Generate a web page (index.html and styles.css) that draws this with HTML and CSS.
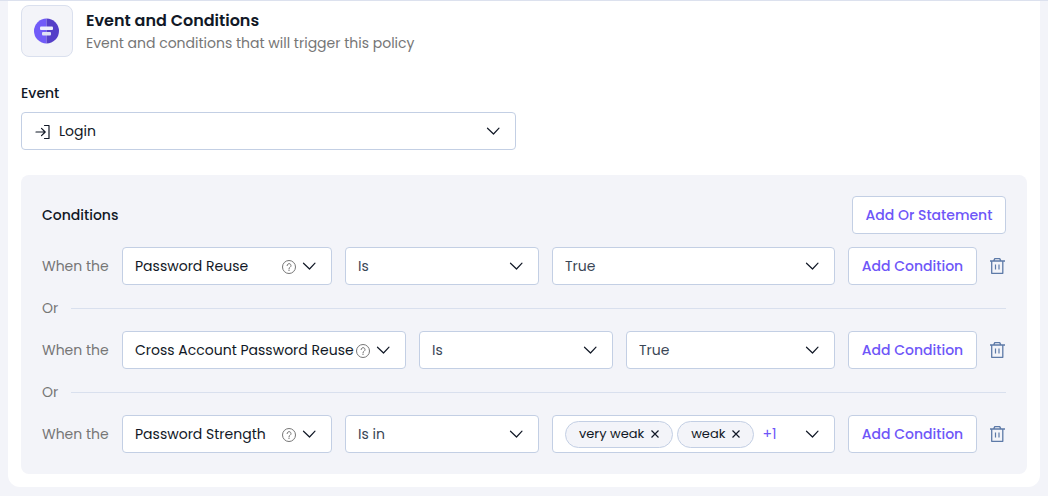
FILE: index.html
```html
<!DOCTYPE html>
<html lang="en">
<head>
  <meta charset="UTF-8">
  <meta name="viewport" content="width=device-width, initial-scale=1.0">
  <title>Policy | Event and Conditions</title>
  <link rel="stylesheet" href="styles.css">
</head>
<body>
  <svg class="sprite" aria-hidden="true">
    <symbol id="icon-chevron" viewBox="0 0 14 14">
      <path d="M1.500 4.200L7.500 10L13 4.200" fill="none" stroke="currentColor" stroke-width="1.200" stroke-linecap="round" stroke-linejoin="round"/>
    </symbol>
    <symbol id="icon-help" viewBox="0 0 16 16">
      <circle cx="8" cy="8" r="6.500" fill="none" stroke="currentColor"/>
      <path d="M6.100 6.600a1.950 1.950 0 1 1 3 1.600C8.300 8.700 8 9 8 9.700" fill="none" stroke="currentColor" stroke-linecap="round"/>
      <circle cx="8" cy="11.300" r="0.700" fill="currentColor"/>
    </symbol>
    <symbol id="icon-trash" viewBox="0 0 16 18">
      <path d="M0 4H15M1.700 4V16.300H12.800V4M3.800 3.600L4.800 1.600H9.700L10.700 3.600" fill="none" stroke="currentColor" stroke-width="1.300" stroke-linejoin="round"/>
      <path d="M5.500 7.500V12.500M9 7.500V12.500" stroke="currentColor" stroke-width="1.200"/>
    </symbol>
    <symbol id="icon-close" viewBox="0 0 10 10">
      <path d="M1.500 1.500L8.500 8.500M8.500 1.500L1.500 8.500" stroke="currentColor" stroke-width="1.200"/>
    </symbol>
  </svg>

  <main class="card">
    <header class="card-header">
      <div class="policy-icon">
        <svg width="26" height="26" viewBox="0 0 26 26" aria-hidden="true">
          <path d="M12.500 0.500a12.500 12.500 0 0 0 0 25z" fill="#715bf8"/>
          <path d="M12.500 0.500a12.500 12.500 0 0 1 0 25z" fill="#553fc8"/>
          <rect x="6" y="8.500" width="13" height="3.500" rx="1" fill="#eef0fb"/>
          <rect x="8" y="14" width="9" height="3.500" rx="1" fill="#dfe1f4"/>
        </svg>
      </div>
      <div>
        <h1>Event and Conditions</h1>
        <p>Event and conditions that will trigger this policy</p>
      </div>
    </header>

    <div class="event">
      <label for="event">Event</label>
      <div class="field">
        <svg class="login-icon" width="16" height="16" viewBox="0 0 16 16" aria-hidden="true">
          <path d="M1 8H10M6.500 4.300L10.200 8L6.500 11.700M9.500 1.500H14V14.500H9.500" fill="none" stroke="currentColor" stroke-width="1.200" stroke-linecap="round" stroke-linejoin="round"/>
        </svg>
        <select id="event" class="has-icon"><option>Login</option></select>
        <svg class="chevron" aria-hidden="true"><use href="#icon-chevron"/></svg>
      </div>
    </div>

    <section class="conditions">
      <div class="conditions-header">
        <h2>Conditions</h2>
        <button type="button" class="btn btn-or">Add Or Statement</button>
      </div>

      <div class="condition">
        <label for="attr1">When the</label>
        <div class="field attribute">
          <select id="attr1"><option>Password Reuse</option></select>
          <svg class="help" aria-hidden="true"><use href="#icon-help"/></svg>
          <svg class="chevron" aria-hidden="true"><use href="#icon-chevron"/></svg>
        </div>
        <div class="field operator">
          <select aria-label="Operator"><option>Is</option></select>
          <svg class="chevron" aria-hidden="true"><use href="#icon-chevron"/></svg>
        </div>
        <div class="field value">
          <select aria-label="Value"><option>True</option></select>
          <svg class="chevron" aria-hidden="true"><use href="#icon-chevron"/></svg>
        </div>
        <button type="button" class="btn">Add Condition</button>
        <button type="button" class="delete" aria-label="Delete"><svg aria-hidden="true"><use href="#icon-trash"/></svg></button>
      </div>

      <div class="divider">Or</div>

      <div class="condition">
        <label for="attr2">When the</label>
        <div class="field attribute wide">
          <select id="attr2"><option>Cross Account Password Reuse</option></select>
          <svg class="help" aria-hidden="true"><use href="#icon-help"/></svg>
          <svg class="chevron" aria-hidden="true"><use href="#icon-chevron"/></svg>
        </div>
        <div class="field operator">
          <select aria-label="Operator"><option>Is</option></select>
          <svg class="chevron" aria-hidden="true"><use href="#icon-chevron"/></svg>
        </div>
        <div class="field value">
          <select aria-label="Value"><option>True</option></select>
          <svg class="chevron" aria-hidden="true"><use href="#icon-chevron"/></svg>
        </div>
        <button type="button" class="btn">Add Condition</button>
        <button type="button" class="delete" aria-label="Delete"><svg aria-hidden="true"><use href="#icon-trash"/></svg></button>
      </div>

      <div class="divider">Or</div>

      <div class="condition">
        <label for="attr3">When the</label>
        <div class="field attribute">
          <select id="attr3"><option>Password Strength</option></select>
          <svg class="help" aria-hidden="true"><use href="#icon-help"/></svg>
          <svg class="chevron" aria-hidden="true"><use href="#icon-chevron"/></svg>
        </div>
        <div class="field operator">
          <select aria-label="Operator"><option>Is in</option></select>
          <svg class="chevron" aria-hidden="true"><use href="#icon-chevron"/></svg>
        </div>
        <div class="field value multi">
          <span class="chip">very weak <button type="button" aria-label="Remove very weak"><svg aria-hidden="true"><use href="#icon-close"/></svg></button></span>
          <span class="chip">weak <button type="button" aria-label="Remove weak"><svg aria-hidden="true"><use href="#icon-close"/></svg></button></span>
          <button type="button" class="more">+1</button>
          <select aria-label="Value"><option label=" "></option></select>
          <svg class="chevron" aria-hidden="true"><use href="#icon-chevron"/></svg>
        </div>
        <button type="button" class="btn">Add Condition</button>
        <button type="button" class="delete" aria-label="Delete"><svg aria-hidden="true"><use href="#icon-trash"/></svg></button>
      </div>
    </section>
  </main>
</body>
</html>
```
FILE: styles.css
```css
* {
  box-sizing: border-box;
}
body {
  margin: 0;
  padding: 0 8px 8px;
  border-top: 1px solid #dce1ee;
  background: #f3f4f9;
  color: #111826;
  font-family: Poppins, Inter, sans-serif;
  font-size: 14px;
  line-height: 20px;
}
h1, h2, p {
  margin: 0;
}
button, select {
  font: inherit;
  color: inherit;
  margin: 0;
  padding: 0;
  border: none;
  background: none;
  cursor: pointer;
}
.sprite {
  display: none;
}
.card {
  padding: 4px 13px 13px;
  background: #fff;
  border-radius: 0 0 12px 12px;
}

/* header */
.card-header {
  display: flex;
  gap: 13px;
}
.policy-icon {
  display: flex;
  align-items: center;
  justify-content: center;
  width: 52px;
  height: 52px;
  background: #f3f4f9;
  border: 1px solid #dae0ee;
  border-radius: 8px;
}
.card-header h1 {
  padding-top: 4px;
  font-size: 16px;
  line-height: 24px;
  font-weight: 600;
}
.card-header p {
  color: #767676;
}

/* event */
.event {
  max-width: 495px;
  margin: 26px 0 25px;
}
.event label {
  display: block;
  margin-bottom: 9px;
  font-weight: 500;
}
.field {
  position: relative;
  height: 38px;
  background: #fff;
  border: 1px solid #c3cfe4;
  border-radius: 4px;
}
.field select {
  appearance: none;
  width: 100%;
  height: 36px;
  padding: 0 36px 0 12px;
}
.field .has-icon {
  padding-left: 37px;
}
.field .chevron,
.field .help,
.login-icon {
  position: absolute;
  top: 11px;
  pointer-events: none;
}
.chevron {
  right: 15px;
  width: 14px;
  height: 14px;
}
.help {
  right: 34px;
  width: 16px;
  height: 16px;
  color: #767676;
}
.login-icon {
  left: 13px;
}

/* conditions */
.conditions {
  padding: 21px;
  background: #f3f4f9;
  border-radius: 8px;
}
.conditions-header {
  display: flex;
  align-items: center;
  justify-content: space-between;
  margin-bottom: 13px;
}
.conditions h2 {
  font-size: 14px;
  font-weight: 500;
}
.btn {
  width: 129px;
  height: 38px;
  background: #fff;
  border: 1px solid #c3cfe4;
  border-radius: 4px;
  color: #6e56f8;
  font-weight: 500;
  white-space: nowrap;
}
.btn-or {
  width: 154px;
}
.condition {
  display: flex;
  align-items: center;
  gap: 13px;
}
.condition label {
  width: 67px;
  color: #767676;
  white-space: nowrap;
}
.attribute {
  width: 210px;
}
.wide {
  width: 284px;
}
.operator {
  width: 194px;
}
.value {
  flex: 1;
}
.operator select,
.value select {
  color: #3a4656;
}
.multi {
  display: flex;
  align-items: center;
  gap: 4px;
  padding-left: 12px;
}
.multi select {
  flex: 1;
  width: 0;
}
.chip {
  display: flex;
  align-items: center;
  gap: 6px;
  height: 27px;
  padding: 0 12px 0 13px;
  background: #f3f4f9;
  border: 1px solid #c3cfe4;
  border-radius: 14px;
  font-size: 13px;
  white-space: nowrap;
}
.chip button,
.chip svg {
  display: block;
  width: 10px;
  height: 10px;
}
.more {
  margin-left: 4px;
  color: #6e56f8;
}
.delete {
  width: 16px;
  height: 18px;
  color: #5d7aa8;
}
.delete svg {
  display: block;
  width: 16px;
  height: 18px;
}
.divider {
  display: flex;
  align-items: center;
  gap: 13px;
  margin: 13px 0;
  color: #767676;
}
.divider::after {
  content: "";
  flex: 1;
  height: 1px;
  background: #d9e0ee;
}
```
